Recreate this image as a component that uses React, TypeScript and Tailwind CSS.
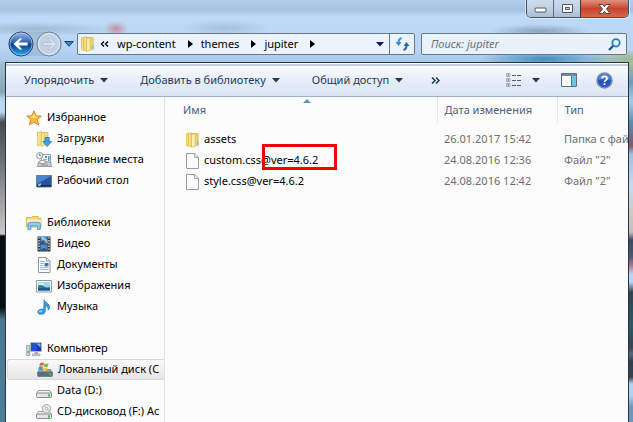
import type { ReactNode } from "react";

type Item = { label: string; icon: ReactNode; selected?: boolean };

function Down({ className = "text-[#1e395b]" }: { className?: string }) {
  return (
    <svg width="8" height="5" viewBox="0 0 8 5" className={`shrink-0 ${className}`}>
      <path d="M0 0h8L4 4.6z" fill="currentColor" />
    </svg>
  );
}

function Right() {
  return (
    <svg width="5" height="8" viewBox="0 0 5 8" className="shrink-0">
      <path d="M0 0l5 4-5 4z" fill="#000" />
    </svg>
  );
}

function FolderIcon() {
  return (
    <svg width="16" height="16" viewBox="0 0 16 16" className="shrink-0">
      <path d="M1.500 1.500l5-.8v14l-5-1z" fill="#f3dc82" stroke="#dcb94f" strokeWidth=".7" />
      <path d="M7 1.500h6.200v12H7z" fill="#efd06c" stroke="#dcb94f" strokeWidth=".7" />
      <path d="M6.500 2.800l3.700-1.300v12.800l-3.700 1z" fill="#fdf0b4" stroke="#d8b54c" strokeWidth=".7" />
      <path d="M12 9h1.600v4.200H12z" fill="#7ec3ea" />
      <path d="M3.500 2v11.500" stroke="#e0bd52" strokeWidth=".8" />
    </svg>
  );
}

function FileIcon() {
  return (
    <svg width="16" height="16" viewBox="0 0 16 16" className="shrink-0">
      <path d="M1.500.5h8.300l3.700 3.700v11.300h-12z" fill="#fcfcfc" stroke="#9b9b9b" />
      <path d="M9.500.8v3.700h3.700" fill="#eee" stroke="#a6a6a6" />
    </svg>
  );
}

function StarIcon() {
  return (
    <svg width="16" height="16" viewBox="0 0 16 16" className="shrink-0">
      <path d="M8 .8l2.100 4.900 5.200.4-4 3.500 1.300 5.300L8 12.100l-4.600 2.800 1.300-5.300-4-3.500 5.200-.4z" fill="#fdb83a" stroke="#e2852a" strokeLinejoin="round" />
      <path d="M8 3l1.400 3.500 3.300.3-4.700 1.400-4.500-1.400 3.100-.3z" fill="#ffe58f" />
    </svg>
  );
}

function DownloadsIcon() {
  return (
    <svg width="16" height="16" viewBox="0 0 16 16" className="shrink-0">
      <path d="M1.500 1.500l4-.8v13l-4 1z" fill="#f7e28c" stroke="#d8b54c" strokeWidth=".7" />
      <path d="M5.500 1.500H12v12H5.500z" fill="#f4d97a" stroke="#d8b54c" strokeWidth=".7" />
      <path d="M5.300 2.600l2.800-1v13l-2.800.9z" fill="#fdf0b4" stroke="#d8b54c" strokeWidth=".7" />
      <path d="M9.200 6.500h4v4h2.300l-4.300 5-4.300-5h2.300z" fill="#3fa3e6" stroke="#1b6db5" strokeWidth=".8" />
    </svg>
  );
}

function RecentIcon() {
  return (
    <svg width="16" height="16" viewBox="0 0 16 16" className="shrink-0">
      <path d="M5.500 2.500h9v9h-9z" fill="#eef3f7" stroke="#9aa3aa" />
      <path d="M9 4h2v2H9zM12 4h1.500v5H12z" fill="#4b96c8" />
      <path d="M7 7.500h4M7 9.500h4" stroke="#7fb6d8" />
      <path d="M2.500 10h12l1 4.500h-14z" fill="#c9ccd0" stroke="#83888d" strokeWidth=".8" />
      <path d="M4 8.500h5v3H4z" fill="#f7f7f7" stroke="#888" strokeWidth=".7" />
      <path d="M5 13h7" stroke="#8b9095" />
      <circle cx="3.700" cy="3.700" r="3.100" fill="#f4f6f8" stroke="#8c949b" />
      <path d="M3.700 1.800v2h1.600" fill="none" stroke="#555" strokeWidth=".8" />
    </svg>
  );
}

function DesktopIcon() {
  return (
    <svg width="16" height="16" viewBox="0 0 16 16" className="shrink-0">
      <path d="M.5 2.500h15v11.500H.5z" fill="#2454a4" stroke="#6b7c93" />
      <path d="M1 3h14L1 11z" fill="#4b84d0" />
      <path d="M1 12h14v1.600H1z" fill="#16294f" />
      <path d="M2 11h2.400v2H2z" fill="#3ad0ff" />
      <path d="M3.500 10.500h1.500v1.200H3.500z" fill="#ffd24a" />
    </svg>
  );
}

function LibraryIcon() {
  return (
    <svg width="16" height="16" viewBox="0 0 16 16" className="shrink-0">
      <path d="M.5 2.500h5l1-1h6v2H15v8.500H.5z" fill="#f3d878" stroke="#cfa944" strokeWidth=".8" />
      <path d="M1 4.500h13.800v4H1z" fill="#fcefb1" />
      <path d="M2 14.500V9.200Q2 7.300 4 7.300h8.300q2 0 2 2v5.200h-2.800v-3.700H4.800v3.700z" fill="#8bcdf3" stroke="#3d92cc" strokeWidth=".8" />
    </svg>
  );
}

function VideoIcon() {
  return (
    <svg width="16" height="16" viewBox="0 0 16 16" className="shrink-0">
      <path d="M1.500.5h13v15h-13z" fill="#32363c" />
      <path d="M4.500 1h7v6.500h-7zM4.500 8.500h7V15h-7z" fill="#3c9be0" />
      <path d="M4.500 1h3l4 4v2.500h-2z" fill="#8ed1f7" />
      <path d="M5 6l3-2 3 3.500H5zM5 13.500l3-1.500 3 1.500V15H5z" fill="#2d4f8c" />
      <path d="M7 6l2-1.500 1 3zM8 9l3 .5-1 2z" fill="#c94f3d" />
      <path d="M3 1.200v14M13 1.200v14" stroke="#eee" strokeWidth="1.300" strokeDasharray="1.4 1.4" />
    </svg>
  );
}

function DocsIcon() {
  return (
    <svg width="16" height="16" viewBox="0 0 16 16" className="shrink-0">
      <path d="M2.500.5h8l3.500 3.500v11.500H2.500z" fill="#fcfdfe" stroke="#8d969e" />
      <path d="M10.300.8V4.300h3.500" fill="#e4e9ee" stroke="#9da5ac" />
      <path d="M4 4.500h5M4 6.500h4M4 8.500h3.500M4 10.500h8.500M4 12.500h8.500" stroke="#a3b8c8" />
      <path d="M8.500 6h4v3.400h-4z" fill="#2f79b8" />
    </svg>
  );
}

function PicturesIcon() {
  return (
    <svg width="16" height="16" viewBox="0 0 16 16" className="shrink-0">
      <path d="M.5 2.500h15v11.500H.5z" fill="#fff" stroke="#8f979e" />
      <path d="M2 4h12v8.500H2z" fill="#9fd5f4" />
      <path d="M2 7.500q3-1.500 6 .8t6 .2v4H2z" fill="#2e8f73" />
      <path d="M2 10q6-1 12 .3v2.200H2z" fill="#1c5c94" />
      <path d="M3 5.500h5v1.200H3z" fill="#fff" />
    </svg>
  );
}

function MusicIcon() {
  return (
    <svg width="16" height="16" viewBox="0 0 16 16" className="shrink-0">
      <path d="M8 .6c.5 3 5.500 3.600 5.500 7.400 0 1.500-.8 2.800-1.500 3.400.6-3-1-4-2.600-4.600v5.400C9.400 14 7.500 15.300 5 15.300c-2 0-3.200-.9-3.200-2.300 0-1.700 1.800-2.900 4-2.900.8 0 1.500.1 2 .4z" fill="#2f9ae0" stroke="#1c6fb4" strokeWidth=".6" />
      <ellipse cx="4.700" cy="12.300" rx="1.800" ry="1" fill="#8fd1f8" />
    </svg>
  );
}

function ComputerIcon() {
  return (
    <svg width="16" height="16" viewBox="0 0 16 16" className="shrink-0">
      <path d="M.7 4.500h3v10h-3z" fill="#d5dade" stroke="#8a9299" strokeWidth=".8" />
      <path d="M1.500 10h1.500v2H1.500z" fill="#42b552" />
      <path d="M4.500 1.500h11v9h-11z" fill="#1838b4" stroke="#b2bac2" />
      <path d="M5 2h5.500v8H5z" fill="#2650d8" />
      <path d="M10 2.500h4.500v4z" fill="#7fa4f4" />
      <path d="M8.500 11h3.500v2H8.500z" fill="#a5adb5" />
      <path d="M6.500 13h7.500v1.700H6.500z" fill="#cfd4d9" stroke="#8e969d" strokeWidth=".6" />
    </svg>
  );
}

function Drive({ children, dark }: { children?: ReactNode; dark?: boolean }) {
  return (
    <svg width="16" height="16" viewBox="0 0 16 16" className="shrink-0">
      <path d="M2.500 7.500h11l2 3H.5z" fill={dark ? "#8fa3ad" : "#f1f2f3"} stroke="#80878c" strokeWidth=".8" />
      <rect x=".5" y="10" width="15" height="4.500" rx="1" fill={dark ? "#4c7488" : "#e3e5e7"} stroke="#6d757b" strokeWidth=".8" />
      <path d="M12 11.200h2v2.300h-2z" fill="#3fc14a" />
      {children}
    </svg>
  );
}

const groups: { title: Item; items: Item[] }[] = [
  {
    title: { label: "Избранное", icon: <StarIcon /> },
    items: [
      { label: "Загрузки", icon: <DownloadsIcon /> },
      { label: "Недавние места", icon: <RecentIcon /> },
      { label: "Рабочий стол", icon: <DesktopIcon /> },
    ],
  },
  {
    title: { label: "Библиотеки", icon: <LibraryIcon /> },
    items: [
      { label: "Видео", icon: <VideoIcon /> },
      { label: "Документы", icon: <DocsIcon /> },
      { label: "Изображения", icon: <PicturesIcon /> },
      { label: "Музыка", icon: <MusicIcon /> },
    ],
  },
  {
    title: { label: "Компьютер", icon: <ComputerIcon /> },
    items: [
      {
        label: "Локальный диск (C",
        selected: true,
        icon: (
          <Drive dark>
            <path d="M3 1q2-1.200 4 0L6.300 4.100q-2-1-4 0z" fill="#ee6a2c" />
            <path d="M7.600 1.300q2 1 4 0l-.8 3.200q-2 1-4 0z" fill="#7cc142" />
            <path d="M2 4.900q2-1.200 4 0l-.8 3.100q-2-1-4 0z" fill="#3f93de" />
            <path d="M6.600 5.200q2 1 4 0l-.8 3.200q-2 1-4 0z" fill="#fbc62f" />
          </Drive>
        ),
      },
      { label: "Data (D:)", icon: <Drive /> },
      {
        label: "CD-дисковод (F:) Ac",
        icon: (
          <Drive>
            <circle cx="10.500" cy="4.700" r="4.200" fill="#e9ecee" stroke="#92999f" strokeWidth=".8" />
            <path d="M10.500 4.700L8 1.500M10.500 4.700l3.400 2" stroke="#a9c9a2" />
            <circle cx="10.500" cy="4.700" r="1.300" fill="#fff" stroke="#8a9197" strokeWidth=".7" />
          </Drive>
        ),
      },
    ],
  },
];

const files = [
  { name: "assets", date: "26.01.2017 15:42", type: "Папка с фай", folder: true },
  { name: "custom.css@ver=4.6.2", date: "24.08.2016 12:36", type: 'Файл "2"', marked: true },
  { name: "style.css@ver=4.6.2", date: "24.08.2016 12:42", type: 'Файл "2"' },
];

function CaptionButtons() {
  return (
    <div className="mr-1 flex h-[18px] overflow-hidden rounded-b-[5px] border border-t-0 border-[#42536a] shadow-[0_0_0_1px_rgba(255,255,255,0.5)]">
      <button aria-label="Свернуть" className="flex w-[26px] items-center justify-center bg-linear-to-b from-[#ccdcec] via-[#c0d1e3] via-50% to-[#a9bfd6]">
        <svg width="13" height="12" viewBox="0 0 13 12">
          <rect x="1" y="5" width="11" height="4" rx="1" fill="#fff" stroke="#535666" />
        </svg>
      </button>
      <button aria-label="Развернуть" className="flex w-[27px] items-center justify-center border-l border-[#5c6f86] bg-linear-to-b from-[#ccdcec] via-[#c0d1e3] via-50% to-[#a9bfd6]">
        <svg width="13" height="12" viewBox="0 0 13 12">
          <path d="M1.500 1.500h10v8h-10zM4.500 4.500v2h4v-2z" fill="#fff" fillRule="evenodd" stroke="#535666" />
        </svg>
      </button>
      <button aria-label="Закрыть" className="flex w-12 items-center justify-center border-l border-[#5c2a2a] bg-linear-to-b from-[#e0917f] via-[#c8432b] via-50% to-[#d4674a]">
        <svg width="13" height="12" viewBox="0 0 13 12">
          <path d="M1 1.500h3.700l1.800 2.200 1.800-2.200H12L8.500 6l3.500 4.500H8.300L6.500 8.300l-1.800 2.200H1L4.500 6z" fill="#fff" stroke="#54454f" />
        </svg>
      </button>
    </div>
  );
}

function NavButtons() {
  return (
    <div className="flex h-6 items-center gap-0.5 rounded-full bg-[#8fa9c4]/50">
      <button aria-label="Назад">
        <svg width="26" height="26" viewBox="0 0 26 26">
          <defs>
            <linearGradient id="back" x1="0" y1="0" x2="0" y2="1">
              <stop offset="0" stopColor="#9ab8dd" />
              <stop offset=".45" stopColor="#2c61b0" />
              <stop offset=".52" stopColor="#0c3c91" />
              <stop offset="1" stopColor="#2bb0f2" />
            </linearGradient>
          </defs>
          <circle cx="13" cy="13" r="12" fill="url(#back)" stroke="#2b4370" />
          <circle cx="13" cy="13" r="11" fill="none" stroke="#c3d8ee" strokeOpacity=".6" />
          <path d="M5.500 13l6-5.500h2.800l-3.700 4h9v3h-9l3.700 4h-2.800z" fill="#fff" />
        </svg>
      </button>
      <button aria-label="Вперед" disabled>
        <svg width="26" height="26" viewBox="0 0 26 26">
          <circle cx="13" cy="13" r="12" fill="#b9cce0" stroke="#71859f" />
          <circle cx="13" cy="13" r="10.500" fill="#c2d2e3" stroke="#e4edf6" />
          <path d="M20.500 13l-6-5.500h-2.800l3.700 4h-9v3h9l-3.700 4h2.800z" fill="#d5e1ee" stroke="#a9bdd1" strokeWidth=".7" />
        </svg>
      </button>
    </div>
  );
}

function AddressBar() {
  return (
    <div className="flex h-[22px] min-w-0 flex-1 items-center rounded-[2px] border border-[#66788e] bg-[#ecf3fc] text-black">
      <div className="flex min-w-0 flex-1 items-center pl-0.5">
        <FolderIcon />
        <button aria-label="Предыдущие папки" className="ml-1">
          <svg width="9" height="6" viewBox="0 0 9 6">
            <path d="M4 .5L1.500 3 4 5.500M8 .5L5.500 3 8 5.500" fill="none" stroke="#000" strokeWidth="1.400" />
          </svg>
        </button>
        {["wp-content", "themes", "jupiter"].map((p) => (
          <div key={p} className="flex items-center">
            <button className="pr-3 pl-2 leading-4">{p}</button>
            <Right />
          </div>
        ))}
      </div>
      <button aria-label="Журнал" className="px-[5px]">
        <Down className="text-[#0b1a6b]" />
      </button>
      <button aria-label="Обновить" className="flex h-full w-[25px] items-center justify-center border-l border-[#66788e]">
        <svg width="15" height="14" viewBox="0 0 15 14">
          <path d="M6.500 1Q3.500 2 3.500 5.500" fill="none" stroke="#3b9ad8" strokeWidth="2" />
          <path d="M.5 5h6l-3 4z" fill="#2f8ed2" />
          <path d="M8.500 13q3-1 3-4.500" fill="none" stroke="#2766ad" strokeWidth="2" />
          <path d="M8.500 9h6l-3-4z" fill="#2766ad" />
        </svg>
      </button>
    </div>
  );
}

function Toolbar() {
  return (
    <div className="flex h-[33px] shrink-0 items-center overflow-hidden border-b border-[#a0afca] bg-linear-to-b from-[#fbfdff] via-[#e6edf8] via-55% to-[#dae4f2] pr-[15px] pl-[18px] whitespace-nowrap text-[#1e395b] shadow-[inset_0_2px_0_#c3cbdc]">
      <div className="flex flex-1 items-center gap-8">
        {["Упорядочить", "Добавить в библиотеку", "Общий доступ"].map((label) => (
          <button key={label} className="flex items-center gap-1.5">
            {label}
            <Down />
          </button>
        ))}
        <button aria-label="Дополнительно" className="-ml-1">
          <svg width="9" height="7" viewBox="0 0 9 7">
            <path d="M1 .5l3 3-3 3M5 .5l3 3-3 3" fill="none" stroke="#1e395b" strokeWidth="1.500" />
          </svg>
        </button>
      </div>
      <button aria-label="Изменить представление" className="flex items-center gap-2.5">
        <svg width="16" height="14" viewBox="0 0 16 14">
          <path d="M.5.500h3.500v3H.5zM.5 5.500h3.500v3H.5zM.5 10.500h3.500v3H.5z" fill="#fff" stroke="#8e9bb0" strokeWidth=".8" />
          <path d="M1.500 1.300h1.500v1.400H1.500z" fill="#3a9a4a" />
          <path d="M1.500 6.300h1.500v1.400H1.500z" fill="#d33030" />
          <path d="M1.500 11.300h1.500v1.400H1.500z" fill="#3465c8" />
          <path d="M6 2.500h4M11 2.500h4M6 7.500h4M11 7.500h4M6 12.500h4M11 12.500h4" stroke="#4d5c74" />
        </svg>
        <Down />
      </button>
      <button aria-label="Область просмотра" className="ml-[21px]">
        <svg width="16" height="14" viewBox="0 0 16 14">
          <path d="M.5.500h15v13H.5z" fill="#fff" stroke="#55718d" />
          <path d="M1 1h14v2H1z" fill="#6f8ba5" />
          <path d="M10 3h5v10h-5z" fill="#6cc3e3" />
          <path d="M10.500 3v10" stroke="#3787ab" />
        </svg>
      </button>
      <button aria-label="Справка" className="ml-[19px]">
        <svg width="17" height="17" viewBox="0 0 17 17">
          <circle cx="8.500" cy="8.500" r="7.500" fill="#2453c0" stroke="#8490a5" strokeWidth="1.600" />
          <path d="M2.500 8a6 6 0 0112 0q-6-2-12 0z" fill="#5b86dc" />
          <path d="M6 6.500Q6 4.300 8.500 4.300T11 6.400Q11 7.500 9.700 8.200T8.500 10" fill="none" stroke="#fff" strokeWidth="1.700" />
          <circle cx="8.500" cy="12.200" r="1.100" fill="#fff" />
        </svg>
      </button>
    </div>
  );
}

function Sidebar() {
  return (
    <nav className="flex w-[159px] shrink-0 flex-col gap-[21px] overflow-hidden border-r border-[#d6e5f5] pt-2.5 whitespace-nowrap">
      {groups.map((g) => (
        <ul key={g.title.label}>
          <li>
            <a href="#" className="flex h-[21px] items-center gap-[5px] pl-5">
              {g.title.icon}
              {g.title.label}
            </a>
          </li>
          {g.items.map((it) => (
            <li key={it.label}>
              <a
                href="#"
                className={`ml-px flex h-[21px] items-center gap-[5px] pl-[29px] ${
                  it.selected ? "rounded-l-[3px] border border-r-0 border-[#d9d9d9] bg-linear-to-b from-[#fafafa] to-[#e5e5e5] pl-7" : ""
                }`}
              >
                {it.icon}
                {it.label}
              </a>
            </li>
          ))}
        </ul>
      ))}
    </nav>
  );
}

function FileList() {
  return (
    <div className="relative min-w-0 flex-1 overflow-hidden">
      <svg width="8" height="4" viewBox="0 0 8 4" className="absolute top-0.5 left-[138px]">
        <path d="M0 4l4-4 4 4z" fill="#5f93b2" />
      </svg>
      <table className="w-full table-fixed border-collapse text-left whitespace-nowrap">
        <colgroup>
          <col className="w-[272px]" />
          <col className="w-[120px]" />
          <col />
        </colgroup>
        <thead className="text-[#4c607a]">
          <tr className="h-[26px]">
            <th className="border-r border-[#dfeaf7] pl-[18px] font-normal">Имя</th>
            <th className="border-r border-[#dfeaf7] pl-[7px] font-normal">Дата изменения</th>
            <th className="pl-[7px] font-normal">Тип</th>
          </tr>
        </thead>
        <tbody className="text-[#6d6d6d] before:block before:h-1.5">
          {files.map((f) => (
            <tr key={f.name} className="h-[21px]">
              <td className="p-0 pl-5 text-black">
                <div className="relative flex items-center gap-[3px]">
                  {f.folder ? <FolderIcon /> : <FileIcon />}
                  {f.name}
                  {f.marked && <span className="absolute -top-2 left-[77px] h-[26px] w-[75px] border-3 border-[#f00505]" />}
                </div>
              </td>
              <td className="p-0 pl-[7px]">{f.date}</td>
              <td className="p-0 pl-[7px]">{f.type}</td>
            </tr>
          ))}
        </tbody>
      </table>
    </div>
  );
}

export default function App() {
  return (
    <div className="flex h-screen flex-col overflow-hidden bg-[#b5d2ef] font-['Noto_Sans','Open_Sans',sans-serif] text-[11px] text-black">
      <header className="bg-[radial-gradient(ellipse_12px_8px_at_116px_29px,#c9808ecc,transparent),radial-gradient(ellipse_80px_7px_at_35px_29px,#8fa9c4aa,transparent),radial-gradient(ellipse_45px_8px_at_225px_28px,#9bb4d0aa,transparent),radial-gradient(ellipse_50px_7px_at_540px_31px,#7f98b2cc,transparent),radial-gradient(ellipse_65px_9px_at_545px_59px,#3f8fc0,transparent),radial-gradient(ellipse_50px_9px_at_633px_59px,#9fb88c,transparent),linear-gradient(180deg,#b3cfeb,#a5c3e1_10px,#bdd9f5_16px,#b9d6f3_48px,#a8c6e6)]">
        <div className="flex h-8 items-start justify-end">
          <CaptionButtons />
        </div>
        <div className="flex h-[30px] items-start pr-1.5 pl-2">
          <NavButtons />
          <button aria-label="Последние страницы" className="flex h-6 w-3 items-center justify-end">
            <svg width="10" height="6" viewBox="0 0 10 6" className="shrink-0">
              <path d="M.7.500h8.600L5 5.300z" fill="#2f8dcb" stroke="#173f78" />
            </svg>
          </button>
          <div className="mt-px ml-[3px] flex min-w-0 flex-1 gap-1.5">
            <AddressBar />
            <form className="flex h-[22px] w-[206px] shrink-0 items-center rounded-[2px] border border-[#66788e] bg-[#e9f1fb] pr-[5px] pl-[9px]">
              <input aria-label="Поиск" placeholder="Поиск: jupiter" className="min-w-0 flex-1 bg-transparent italic outline-none placeholder:text-[#6a6f76]" />
              <button type="button" aria-label="Найти">
                <svg width="13" height="13" viewBox="0 0 13 13">
                  <circle cx="8" cy="4.800" r="3.700" fill="#e6f3fc" stroke="#2a7cc9" strokeWidth="1.800" />
                  <path d="M5.200 7.800L1 12" stroke="#1d4f9c" strokeWidth="2.300" />
                </svg>
              </button>
            </form>
          </div>
        </div>
      </header>
      <div className="flex min-h-0 flex-1">
        <div className="w-[5px] shrink-0 bg-[linear-gradient(180deg,#a3bfd4,#86a3b5_30px,#b9d7f2_38px,#b9d7f2_50px,#484b4d_60px,#6a6e70_95px,#c5c5c5_170px,#c5c5c5_172px,#0a0d10_174px,#0a0d10_245px,#4a7894_258px,#4d7c99)]" />
        <main className="flex min-w-0 flex-1 flex-col border-x border-t border-[#26364a] bg-[#fcfcfc] pt-px">
          <Toolbar />
          <div className="flex min-h-0 flex-1">
            <Sidebar />
            <FileList />
          </div>
        </main>
        <div className="w-1 shrink-0 bg-[linear-gradient(180deg,#a8bf95,#6c9cc0_20px,#a9cbe9_40px,#5c8db5_60px,#7d5a6c_84px,#9fc0de_92px,#c5dcf0_125px,#d0c9c4_150px,#c4bfc0_170px,#3d4a62_178px,#4c5872_195px,#b0788f_204px,#b5d7f7_212px,#b5d7f7_220px,#2f454e_230px,#2c5a63_265px,#39444f_285px,#59657a_292px,#333b44_300px,#39414a_315px,#b3d3f3_322px,#b3d3f3_333px,#6e97bd_345px)]" />
      </div>
    </div>
  );
}
